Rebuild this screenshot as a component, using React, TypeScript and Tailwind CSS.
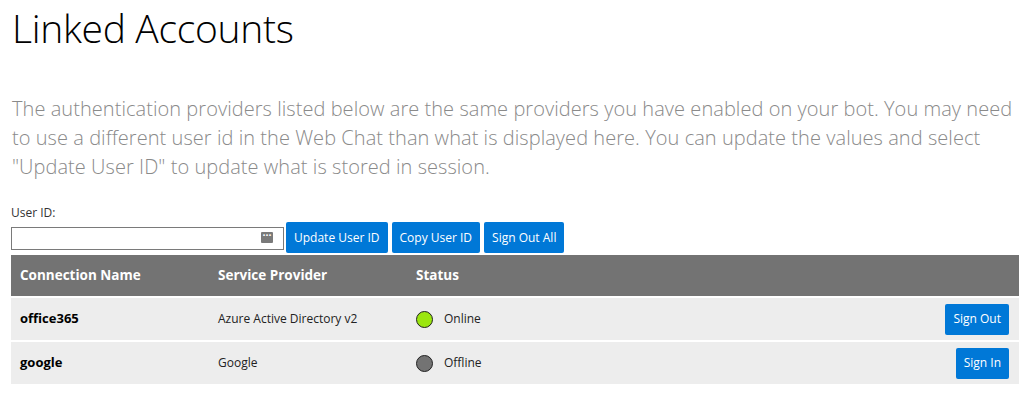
import { useState } from "react";

type Connection = {
    name: string;
    provider: string;
    online: boolean;
};

const connections: Connection[] = [
    { name: "office365", provider: "Azure Active Directory v2", online: true },
    { name: "google", provider: "Google", online: false },
];

const btn = "bg-[#0078d7] text-white text-[12px] rounded-[2px] px-[8px] h-[31px] leading-none";

const App = () => {
    const [userId, setUserId] = useState<string>("");

    return <div className="min-h-screen bg-white pl-[11px] pr-[9px] text-[#222] font-['Open_Sans',sans-serif]">
        <h1 className="text-[39px] font-light leading-none pt-[8px] pl-px text-black tracking-[-0.3px]">Linked Accounts</h1>

        <p className="mt-[47px] text-[20px] font-light leading-[29px] text-[#8a8a8a] tracking-[0.05px] pl-px">
            The authentication providers listed below are the same providers you have enabled on your bot. You may need to use a different user id in the Web Chat than what is displayed here. You can update the values and select "Update User ID" to update what is stored in session.
        </p>

        <label className="block mt-[24px] text-[12px] leading-[16px] text-[#333]">User ID:</label>
        <div className="flex items-end gap-[4px] mt-[1px]">
            <div className="relative w-[273px] h-[23px] border border-[#7a7a7a] flex items-center mb-[3px] -mr-[2px]">
                <input
                    className="w-full h-full px-1 text-[12px] outline-none"
                    value={userId}
                    onChange={e => setUserId(e.target.value)}
                />
                <span className="absolute right-[10px] top-[4px] w-[12px] h-[11px] bg-[#7a7a7a] rounded-[1px] flex items-start justify-center text-white text-[8px] leading-[5px]">•••</span>
            </div>
            <button className={btn}>Update User ID</button>
            <button className={btn}>Copy User ID</button>
            <button className={btn}>Sign Out All</button>
        </div>

        <div className="mt-[2px] w-[1008px] text-[12px]">
            <div className="grid grid-cols-[198px_198px_1fr] h-[41px] items-center bg-[#737373] text-white font-bold text-[13.5px]">
                <div className="pl-[9px]">Connection Name</div>
                <div className="pl-[9px]">Service Provider</div>
                <div className="pl-[9px]">Status</div>
            </div>
            {connections.map(c => (
                <div key={c.name} className="grid grid-cols-[198px_198px_1fr_auto] h-[42px] items-center bg-[#ededed] mt-[2px]">
                    <div className="pl-[9px] font-bold text-black text-[13px]">{c.name}</div>
                    <div className="pl-[9px] text-[#222]">{c.provider}</div>
                    <div className="pl-[9px] flex items-center gap-[11px] text-[#222]">
                        <span className={`w-[17px] h-[17px] rounded-full border border-[#222] ${c.online ? "bg-[#9be60f]" : "bg-[#737373]"}`}></span>
                        {c.online ? "Online" : "Offline"}
                    </div>
                    <div className="pr-[10px]">
                        <button className={btn}>{c.online ? "Sign Out" : "Sign In"}</button>
                    </div>
                </div>
            ))}
        </div>
    </div>
}

export default App
